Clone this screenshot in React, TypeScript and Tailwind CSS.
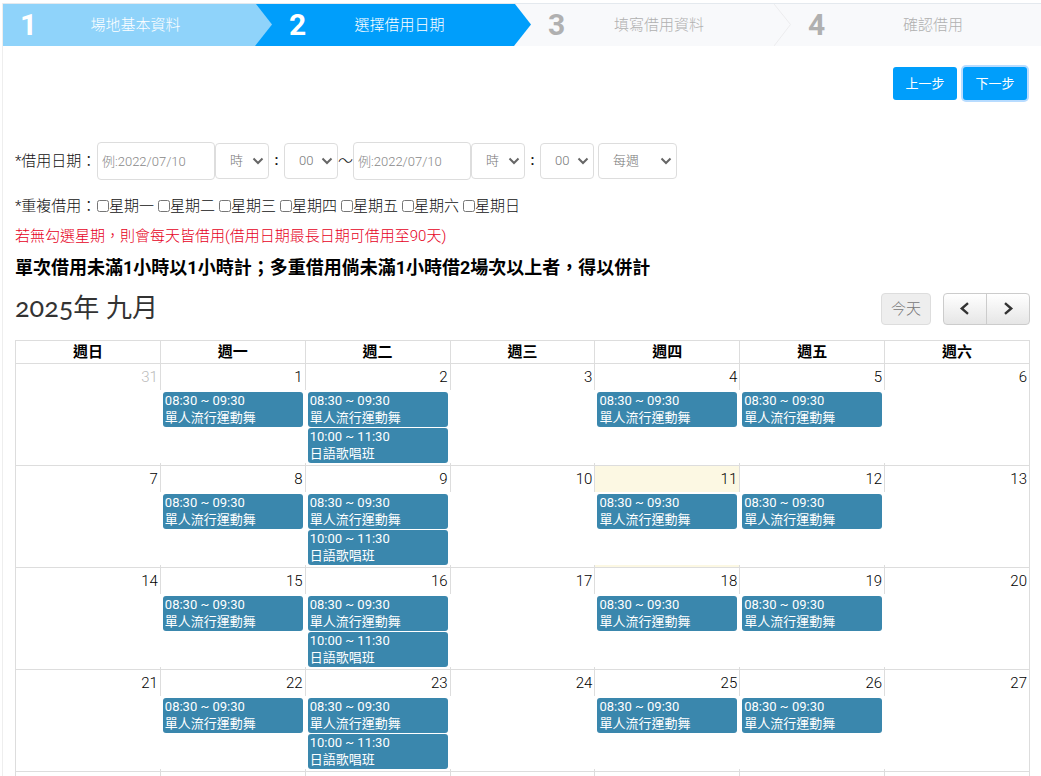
import React from "react";

type Step = { label: string; tone: string; arrow?: "done" | "current" | "outline" };

const steps: Step[] = [
  { label: "場地基本資料", tone: "bg-[#8fd3fa] text-white", arrow: "done" },
  { label: "選擇借用日期", tone: "bg-[#009efb] text-white", arrow: "current" },
  { label: "填寫借用資料", tone: "bg-[#f8f9fb] text-[#b0b0b0]", arrow: "outline" },
  { label: "確認借用", tone: "bg-[#f8f9fb] text-[#b0b0b0]" },
];

const weekdays = ["週日", "週一", "週二", "週三", "週四", "週五", "週六"];
const repeatDays = ["星期一", "星期二", "星期三", "星期四", "星期五", "星期六", "星期日"];

const weeks = [
  [31, 1, 2, 3, 4, 5, 6],
  [7, 8, 9, 10, 11, 12, 13],
  [14, 15, 16, 17, 18, 19, 20],
  [21, 22, 23, 24, 25, 26, 27],
];

const dance = { time: "08:30 ~ 09:30", title: "單人流行運動舞" };
const singing = { time: "10:00 ~ 11:30", title: "日語歌唱班" };
const eventsByWeekday = [[], [dance], [dance, singing], [], [dance], [dance], []];

function StepArrow({ kind }: { kind: "done" | "current" | "outline" }) {
  const body = kind === "done" ? "#8fd3fa" : kind === "current" ? "#009efb" : "#f8f9fb";
  const next = kind === "done" ? "#009efb" : "#f8f9fb";
  return (
    <svg
      className="absolute inset-y-0 right-0 h-full w-[17px]"
      viewBox="0 0 17 42"
      preserveAspectRatio="none"
      aria-hidden="true"
    >
      <rect width="17" height="42" fill={next} />
      <polygon points="0,0 1,0 17,20.5 0,42" fill={body} />
      {kind === "outline" && <polyline points="0,0 16.5,20.5 0,42" fill="none" stroke="#ececee" />}
    </svg>
  );
}

function Select({ label, options, wide }: { label: string; options: string[]; wide?: boolean }) {
  return (
    <span className={`relative flex ${wide ? "w-[79px]" : "w-[54px]"}`}>
      <select
        aria-label={label}
        className="h-9 w-full appearance-none rounded border border-[#ddd] bg-white pl-3.5 text-[13px] text-[#777]"
      >
        {options.map((o) => (
          <option key={o}>{o}</option>
        ))}
      </select>
      <svg
        className="pointer-events-none absolute right-[5px] top-3.5 h-2 w-3"
        viewBox="0 0 12 8"
        fill="none"
        stroke="#666"
        strokeWidth="2"
        aria-hidden="true"
      >
        <path d="M1.5 1.5 6 6l4.500-4.500" />
      </svg>
    </span>
  );
}

function DateTime({ name }: { name: string }) {
  return (
    <>
      <input
        type="text"
        aria-label={`${name}日期`}
        placeholder="例:2022/07/10"
        className="h-[38px] w-[118px] rounded border border-[#ddd] px-1 text-[13px] placeholder:text-[#888]"
      />
      <Select label={`${name}時`} options={["時"]} />
      <span className="w-[15px] pb-0.5 text-center font-medium">:</span>
      <Select label={`${name}分`} options={["00"]} />
    </>
  );
}

function DayCell({ day, column, today, other }: { day: number; column: number; today: boolean; other: boolean }) {
  const line = column > 0 ? "border-l border-[#ddd]" : "";
  const fill = today ? "bg-[#fcf8e3]" : "";
  return (
    <td className={`border-b border-[#ddd] p-0 align-top ${column === 0 ? "border-l" : ""}`}>
      <div className="flex h-[101px] flex-col">
        <div className={`h-[26px] pr-0.5 pt-0.5 text-right leading-[23px] ${line} ${fill} ${other ? "text-[#bbb]" : "text-black"}`}>
          {day}
        </div>
        <div className="flex flex-1 flex-col gap-px pl-[3px] pr-0.5 pt-0.5">
          {eventsByWeekday[column].map((e) => (
            <div key={e.time} className="h-[35px] rounded-[3px] bg-[#3a87ad] px-0.5 text-[13px] font-normal leading-[17px] text-white">
              <div>{e.time}</div>
              <div>{e.title}</div>
            </div>
          ))}
        </div>
        <div className={`h-0.5 ${line} ${fill}`} />
      </div>
    </td>
  );
}

export default function App() {
  return (
    <div
      lang="zh-TW"
      className="h-screen overflow-hidden bg-white pl-0.5 pt-[3px] font-['Roboto','Noto_Sans_CJK_TC',sans-serif] text-[15px] font-light text-[#111]"
    >
      <div className="min-h-screen border-l border-[#eee]">
        <ol className="grid grid-cols-[269fr_259fr_260fr_250fr] border-t border-[#e4e9ee]">
          {steps.map((s, i) => (
            <li key={s.label} className={`relative flex h-[42px] items-center pl-[17px] ${s.tone} ${s.arrow ? "pr-[38px]" : ""}`}>
              {s.arrow && <StepArrow kind={s.arrow} />}
              <span className="pb-0.5 text-[30px] font-bold">{i + 1}</span>
              <span className="flex-1 text-center">{s.label}</span>
            </li>
          ))}
        </ol>

        <main className="pl-3 pr-[11px]">
          <div className="mt-[21px] flex justify-end gap-1.5 pr-[3px] text-[13px] font-normal text-white">
            <button type="button" className="h-[33px] w-16 rounded-[3px] bg-[#009efb]">
              上一步
            </button>
            <button type="button" className="h-[33px] w-16 rounded-[3px] bg-[#009efb] ring-2 ring-[#b8dcff]">
              下一步
            </button>
          </div>

          <div className="mt-[42px] flex items-center">
            <span className="w-[82px] whitespace-nowrap">*借用日期：</span>
            <DateTime name="開始" />
            <span>～</span>
            <DateTime name="結束" />
            <span className="ml-1 flex">
              <Select label="週期" options={["每週"]} wide />
            </span>
          </div>

          <div className="mt-3.5 flex h-6 items-center">
            <span className="w-[82px] whitespace-nowrap">*重複借用：</span>
            <div className="flex gap-1">
              {repeatDays.map((d) => (
                <label key={d} className="flex items-center">
                  <input type="checkbox" className="h-3 w-3" />
                  {d}
                </label>
              ))}
            </div>
          </div>
          <p className="mt-1.5 leading-6 text-[#e60023]">
            若無勾選星期，則會每天皆借用(借用日期最長日期可借用至90天)
          </p>
          <p className="mt-1.5 text-lg font-bold leading-7 text-black">
            單次借用未滿1小時以1小時計；多重借用倘未滿1小時借2場次以上者，得以併計
          </p>

          <div className="mt-[11px] flex h-9 items-start justify-between">
            <h2 className="whitespace-nowrap font-['Lato','Noto_Sans_CJK_TC',sans-serif] text-[26px] font-normal leading-7 text-[#333] oldstyle-nums">
              <span className="text-[27px]">2025</span>年 九月
            </h2>
            <div className="flex gap-3">
              <button type="button" disabled className="h-8 w-[50px] rounded border border-[#ddd] bg-[#eee] text-[#777]">
                今天
              </button>
              <div className="flex h-8 w-[87px] rounded border border-[#ccc] bg-linear-to-b from-white to-[#e6e6e6]">
                <button type="button" aria-label="上個月" className="flex flex-1 items-center justify-center border-r border-[#ccc]">
                  <svg className="h-3.5 w-3" viewBox="0 0 12 14" fill="none" stroke="#333" strokeWidth="2.400" aria-hidden="true">
                    <path d="M9 1.200 2.800 6.500 9 11.800" />
                  </svg>
                </button>
                <button type="button" aria-label="下個月" className="flex flex-1 items-center justify-center">
                  <svg className="h-3.5 w-3" viewBox="0 0 12 14" fill="none" stroke="#333" strokeWidth="2.400" aria-hidden="true">
                    <path d="M3 1.200 9.200 6.500 3 11.800" />
                  </svg>
                </button>
              </div>
            </div>
          </div>

          <table className="mt-[11px] w-full table-fixed border-separate border-spacing-0 border-r border-t border-[#ddd]">
            <thead>
              <tr>
                {weekdays.map((w) => (
                  <th key={w} scope="col" className="h-[23px] border-b border-l border-[#ddd] p-0 font-bold leading-[22px] text-black">
                    {w}
                  </th>
                ))}
              </tr>
            </thead>
            <tbody>
              {weeks.map((week, r) => (
                <tr key={r}>
                  {week.map((day, c) => (
                    <DayCell key={day} day={day} column={c} today={day === 11} other={r === 0 && day === 31} />
                  ))}
                </tr>
              ))}
              <tr>
                {weekdays.map((w) => (
                  <td key={w} className="h-6 border-l border-[#ddd]" />
                ))}
              </tr>
            </tbody>
          </table>
        </main>
      </div>
    </div>
  );
}
